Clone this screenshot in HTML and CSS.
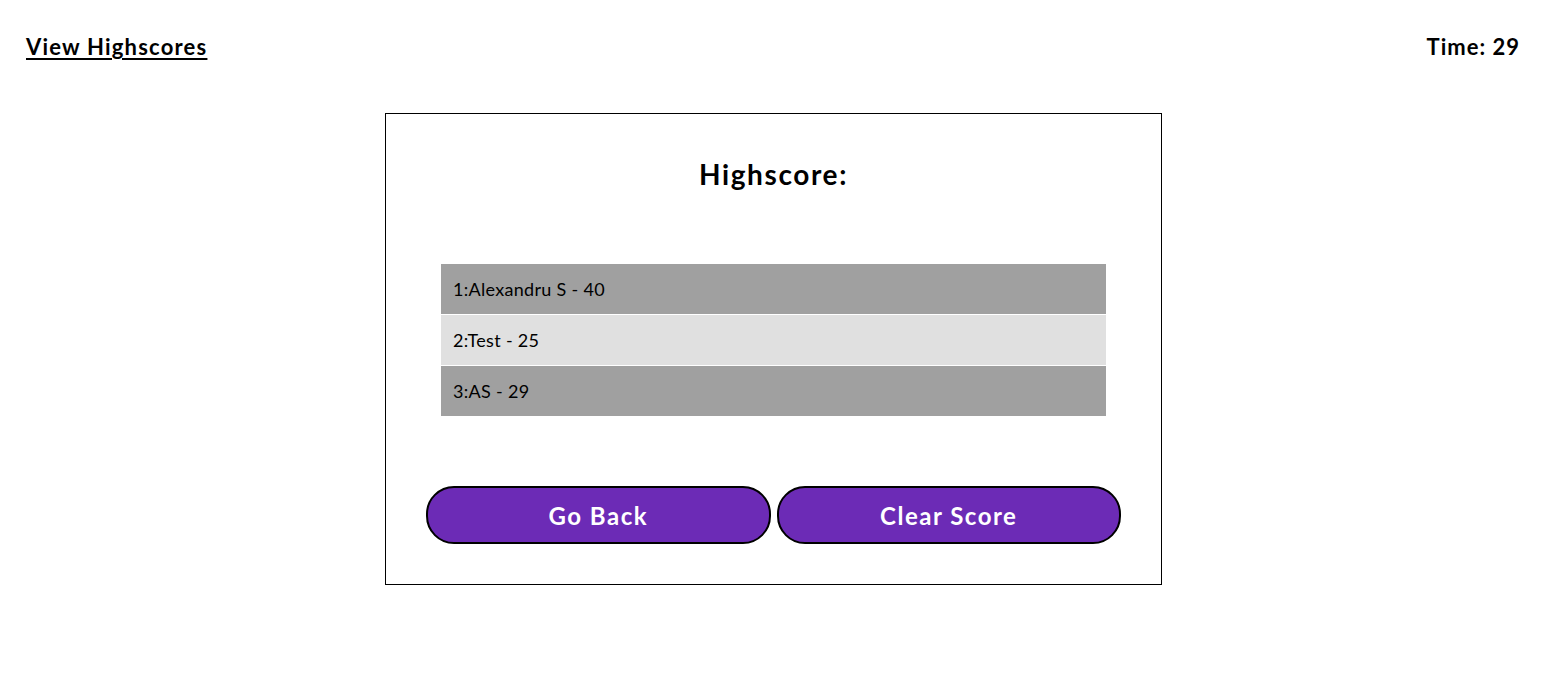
FILE: index.html
```html
<!DOCTYPE html>
<html>
<head>
<meta charset="utf-8">
<link rel="stylesheet" href="styles.css">
</head>
<body>
<header class="topbar">
  <a class="hs-link" href="#">View Highscores</a>
  <div class="timer">Time: 29</div>
</header>
<main class="card">
  <h1 class="title">Highscore:</h1>
  <ol class="scores">
    <li class="row dark">1:Alexandru S - 40</li>
    <li class="row light">2:Test - 25</li>
    <li class="row dark">3:AS - 29</li>
  </ol>
  <div class="actions">
    <button class="btn">Go Back</button>
    <button class="btn">Clear Score</button>
  </div>
</main>
</body>
</html>
```
FILE: styles.css
```css
* { box-sizing: border-box; }
body {
  margin: 0;
  font-family: Lato, "Open Sans", sans-serif;
  color: #000;
  background: #fff;
}
.topbar {
  display: flex;
  justify-content: space-between;
  align-items: flex-start;
  padding: 33px 32px 0 26px;
  height: 80px;
}
.hs-link {
  color: #000;
  font-weight: 700;
  font-size: 22px;
  letter-spacing: 1.2px;
  text-decoration: underline;
  text-decoration-thickness: 2px;
  text-underline-offset: 3px;
}
.timer {
  font-weight: 700;
  font-size: 22px;
  letter-spacing: 1px;
}
.card {
  width: 777px;
  margin: 33px 0 0 385px;
  border: 1px solid #000;
  padding: 40px 40px 40px 40px;
}
.title {
  margin: 0;
  text-align: center;
  font-size: 28px;
  font-weight: 700;
  letter-spacing: 1.6px;
  line-height: 40px;
}
.scores {
  list-style: none;
  margin: 70px 15px 0 15px;
  padding: 0;
  display: flex;
  flex-direction: column;
  gap: 1px;
}
.row {
  height: 50px;
  display: flex;
  align-items: center;
  padding-left: 12px;
  font-size: 18px;
  letter-spacing: 0.3px;
}
.dark { background: #a0a0a0; }
.light { background: #e0e0e0; }
.actions {
  display: flex;
  gap: 6px;
  margin-top: 70px;
}
.btn {
  flex: 1;
  height: 58px;
  border: 2px solid #000;
  border-radius: 28px;
  background: #6c2bb6;
  color: #fff;
  font-family: inherit;
  font-weight: 700;
  font-size: 24px;
  letter-spacing: 1.5px;
}
```
